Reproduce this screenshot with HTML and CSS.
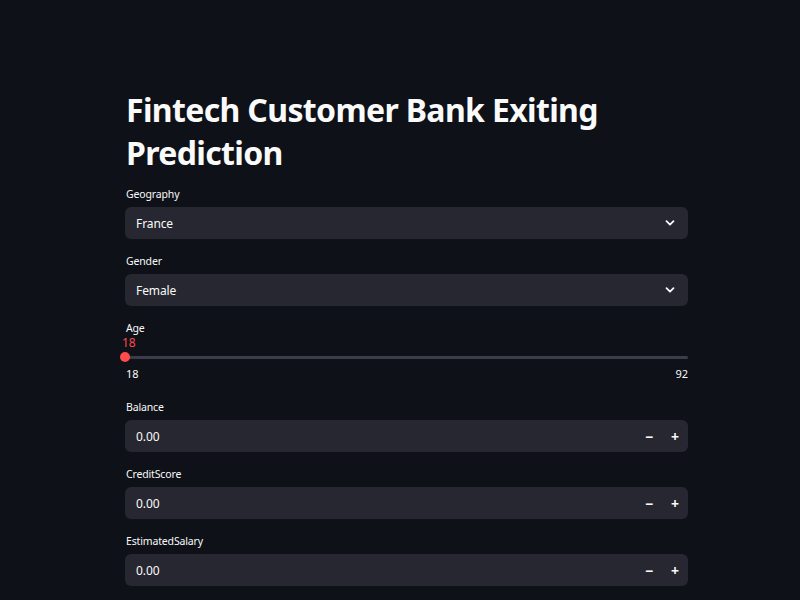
FILE: index.html
```html
<!DOCTYPE html>
<html>
<head>
<meta charset="utf-8">
<link rel="stylesheet" href="styles.css">
</head>
<body>
<main class="app">
  <h1 class="title">Fintech Customer Bank Exiting Prediction</h1>

  <div class="widget">
    <div class="label">Geography</div>
    <div class="box select">
      <span class="value">France</span>
      <svg class="chev" width="12" height="12" viewBox="0 0 12 12"><path d="M2.5 4.2 L6 7.6 L9.5 4.2" fill="none" stroke="#fafafa" stroke-width="1.8" stroke-linecap="round" stroke-linejoin="round"/></svg>
    </div>
  </div>

  <div class="widget">
    <div class="label">Gender</div>
    <div class="box select">
      <span class="value">Female</span>
      <svg class="chev" width="12" height="12" viewBox="0 0 12 12"><path d="M2.5 4.2 L6 7.6 L9.5 4.2" fill="none" stroke="#fafafa" stroke-width="1.8" stroke-linecap="round" stroke-linejoin="round"/></svg>
    </div>
  </div>

  <div class="widget slider-widget">
    <div class="label">Age</div>
    <div class="slider-value"><span class="current">18</span></div>
    <div class="track-area">
      <div class="track"></div>
      <div class="thumb"></div>
    </div>
    <div class="ticks"><span>18</span><span>92</span></div>
  </div>

  <div class="widget">
    <div class="label">Balance</div>
    <div class="box number">
      <span class="value">0.00</span>
      <span class="steps"><span class="step">&minus;</span><span class="step">+</span></span>
    </div>
  </div>

  <div class="widget">
    <div class="label">CreditScore</div>
    <div class="box number">
      <span class="value">0.00</span>
      <span class="steps"><span class="step">&minus;</span><span class="step">+</span></span>
    </div>
  </div>

  <div class="widget">
    <div class="label">EstimatedSalary</div>
    <div class="box number">
      <span class="value">0.00</span>
      <span class="steps"><span class="step">&minus;</span><span class="step">+</span></span>
    </div>
  </div>
</main>
</body>
</html>
```

FILE: styles.css
```css
html, body {
  margin: 0;
  padding: 0;
  background: #0e1117;
  height: 100%;
  overflow: hidden;
}
body {
  font-family: "Noto Sans", "Open Sans", sans-serif;
  color: #fafafa;
}
.app {
  width: 563px;
  margin-left: 125px;
  padding-top: 88px;
}
.title {
  margin: 0 0 12px 1px;
  font-size: 32px;
  line-height: 43px;
  font-weight: 700;
  letter-spacing: -0.65px;
}
.widget {
  margin-bottom: 14px;
}
.label {
  font-size: 10.5px;
  letter-spacing: -0.15px;
  line-height: 16px;
  height: 16px;
  margin-bottom: 5px;
  padding-left: 1px;
}
.box {
  height: 32px;
  background: #262730;
  border-radius: 6px;
  display: flex;
  align-items: center;
  padding-left: 11px;
  box-sizing: border-box;
}
.value {
  flex: 1;
  font-size: 12px;
  letter-spacing: -0.1px;
}
.select {
  padding-right: 12px;
}
.chev {
  display: block;
}
.steps {
  display: flex;
  height: 100%;
}
.step {
  width: 26px;
  display: flex;
  align-items: center;
  justify-content: center;
  font-size: 14px;
  font-weight: 700;
}
.slider-widget .label {
  margin-bottom: 0;
}
.slider-value {
  height: 14px;
  line-height: 14px;
  font-size: 12px;
  color: #ff4b4b;
}
.current {
  display: inline-block;
  margin-left: -3px;
}
.track-area {
  position: relative;
  height: 14px;
  display: flex;
  align-items: center;
}
.track {
  flex: 1;
  height: 3px;
  background: #3b3d46;
  border-radius: 2px;
}
.thumb {
  position: absolute;
  left: -5px;
  top: 2px;
  width: 10px;
  height: 10px;
  border-radius: 50%;
  background: #ff4b4b;
}
.ticks {
  display: flex;
  justify-content: space-between;
  font-size: 11px;
  line-height: 16px;
  margin-top: 2px;
  margin-bottom: 17px;
  padding-left: 1px;
}
```
